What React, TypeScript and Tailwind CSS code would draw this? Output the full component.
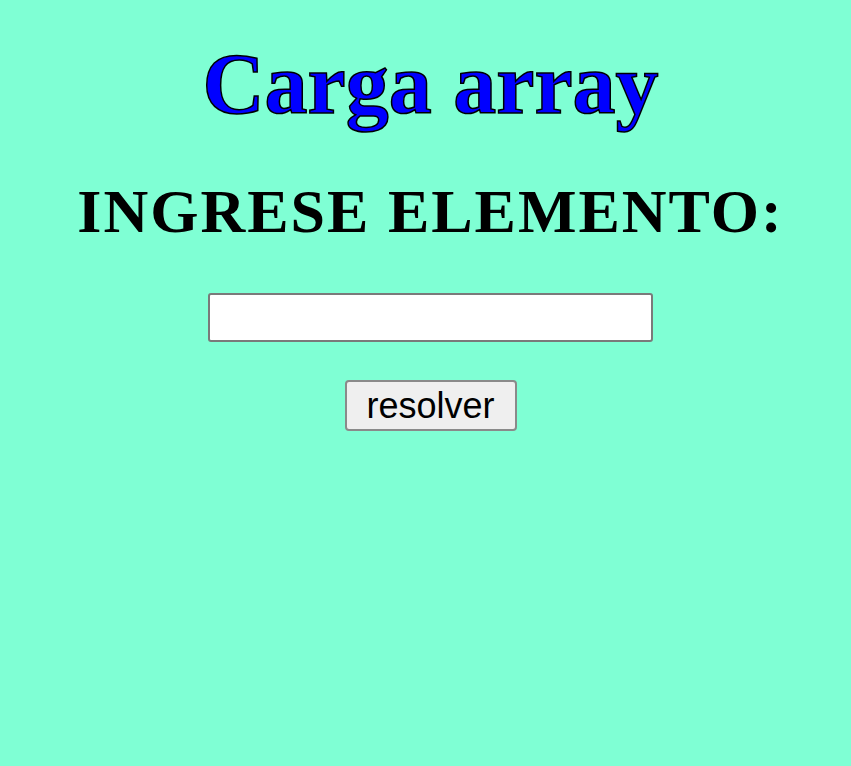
import { useState } from 'react';

export default function App() {
  const [valor, setValor] = useState('');

  return (
    <div className="min-h-[766px] bg-[#7fffd4] pl-[10px] flex flex-col items-center font-['Liberation_Serif',serif]">
      {/* titulo */}
      <h1 className="mt-[34px] text-[86px] leading-[100px] font-bold text-[#0000ff] [-webkit-text-stroke:1.5px_black]">
        Carga array
      </h1>

      <h2 className="mt-[40px] text-[62px] leading-[75px] tracking-[2px] font-bold text-black">
        INGRESE ELEMENTO:
      </h2>

      <input
        type="text"
        value={valor}
        onChange={(e) => setValor(e.target.value)}
        className="mt-[44px] w-[445px] h-[49px] bg-white border-2 border-[#7a7a7a] rounded-[3px] px-2 text-[30px] outline-none"
      />

      <button
        type="button"
        className="mt-[38px] w-[172px] h-[51px] bg-[#efefef] border-2 border-[#8a8a8a] rounded-[4px] text-[36px] leading-none text-black font-['Liberation_Sans',Arial,sans-serif]"
      >
        resolver
      </button>
    </div>
  );
}
